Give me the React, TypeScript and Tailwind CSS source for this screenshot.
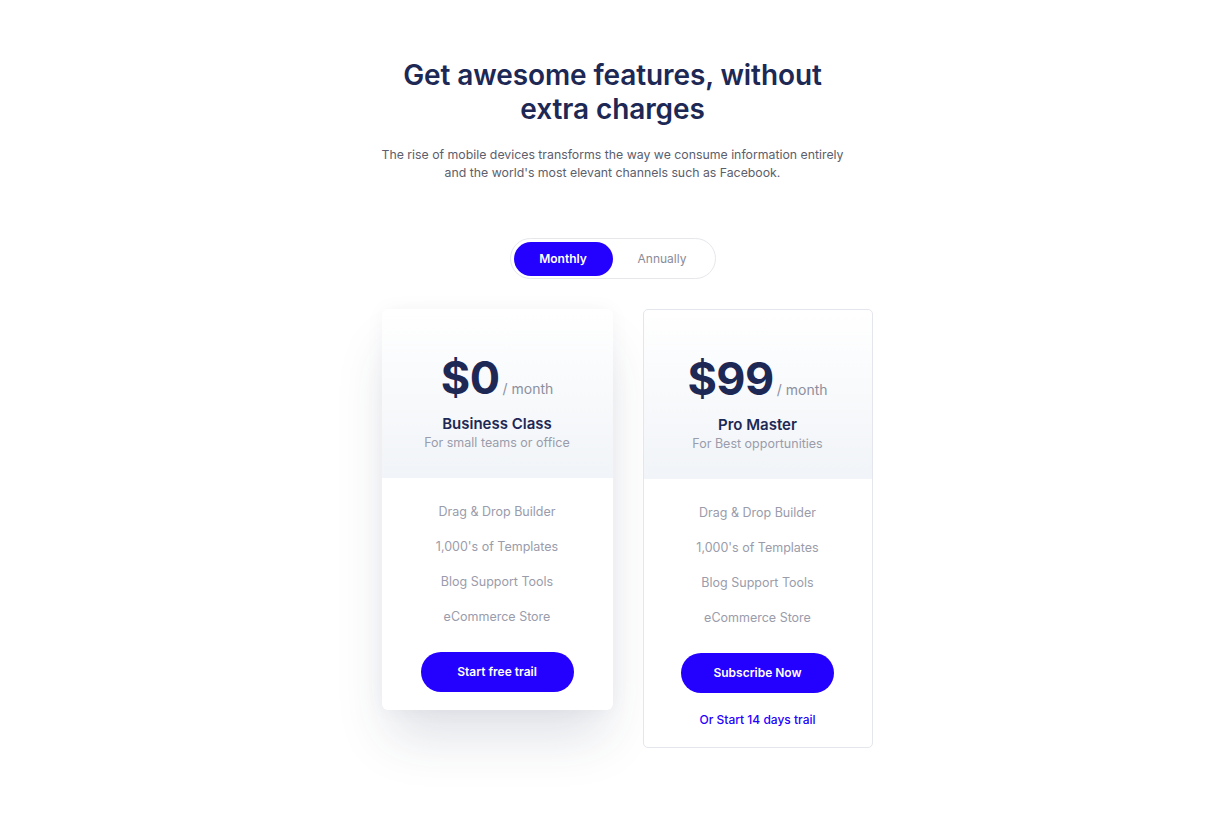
import { useState } from "react";

const features = [
  "Drag & Drop Builder",
  "1,000's of Templates",
  "Blog Support Tools",
  "eCommerce Store",
];

type Plan = {
  price: string;
  name: string;
  tagline: string;
  cta: string;
  trial?: string;
  featured?: boolean;
};

const plans: Plan[] = [
  {
    price: "$0",
    name: "Business Class",
    tagline: "For small teams or office",
    cta: "Start free trail",
    featured: true,
  },
  {
    price: "$99",
    name: "Pro Master",
    tagline: "For Best opportunities",
    cta: "Subscribe Now",
    trial: "Or Start 14 days trail",
  },
];

function PlanCard({ plan }: { plan: Plan }) {
  return (
    <div
      className={
        plan.featured
          ? "w-[231px] rounded-md bg-white shadow-[0_34px_50px_-8px_rgba(40,55,90,0.15),0_0_20px_rgba(40,55,90,0.04)]"
          : "w-[230px] rounded-[5px] border border-[#e3e6ec] bg-white"
      }
    >
      <div className="flex flex-col items-center rounded-t-md bg-gradient-to-b from-white to-[#f1f4f8] pt-[45px] pb-[26px]">
        <div className="flex h-[48px] items-baseline leading-[48px]">
          <span className="text-[45px] font-bold tracking-[-0.5px] text-[#1d2855]">
            {plan.price}
          </span>
          <span className="ml-[3px] text-[14px] text-[#8c8f9e]">/ month</span>
        </div>
        <div className="mt-3 text-[15px] font-semibold leading-5 text-[#1d2855]">
          {plan.name}
        </div>
        <div className="text-[12.5px] leading-[18px] text-[#9a9cab]">
          {plan.tagline}
        </div>
      </div>
      <div className="flex flex-col items-center pt-[16px] pb-[18px]">
        {features.map((f) => (
          <div key={f} className="text-[12.5px] leading-[35px] text-[#9a9cab]">
            {f}
          </div>
        ))}
        <button className="mt-[18px] h-10 w-[153px] rounded-full bg-[#2400ff] text-[12px] font-semibold text-white">
          {plan.cta}
        </button>
        {plan.trial && (
          <a className="mt-[18px] text-[12px] font-medium leading-[18px] text-[#2400ff]">
            {plan.trial}
          </a>
        )}
      </div>
    </div>
  );
}

export default function App() {
  const [billing, setBilling] = useState<"monthly" | "annually">("monthly");

  return (
    <div className="min-h-[816px] bg-white pl-[14px] pt-[58px] font-['Inter',sans-serif]">
      <div className="flex flex-col items-center">
        <h1 className="text-center text-[28px] font-semibold leading-[34px] tracking-[-0.1px] text-[#1d2855]">
          Get awesome features, without
          <br />
          extra charges
        </h1>
        <p className="mt-5 text-center text-[12.3px] leading-[18px] text-[#5b5e6c]">
          The rise of mobile devices transforms the way we consume information entirely
          <br />
          and the world's most elevant channels such as Facebook.
        </p>

        <div className="mt-[56px] flex h-[41px] w-[206px] items-center rounded-full border border-[#e5e7eb] p-[3px]">
          <button
            onClick={() => setBilling("monthly")}
            className={
              billing === "monthly"
                ? "h-[34px] w-[99px] rounded-full bg-[#2400ff] text-[12px] font-semibold text-white"
                : "h-[34px] w-[99px] rounded-full text-[12px] text-[#8a8c98]"
            }
          >
            Monthly
          </button>
          <button
            onClick={() => setBilling("annually")}
            className={
              billing === "annually"
                ? "h-[34px] flex-1 rounded-full bg-[#2400ff] text-[12px] font-semibold text-white"
                : "h-[34px] flex-1 rounded-full text-[12px] text-[#8a8c98]"
            }
          >
            Annually
          </button>
        </div>
      </div>

      <div className="mt-[30px] flex items-start justify-center gap-[30px] pl-[29px]">
        {plans.map((p) => (
          <PlanCard key={p.name} plan={p} />
        ))}
      </div>
    </div>
  );
}
